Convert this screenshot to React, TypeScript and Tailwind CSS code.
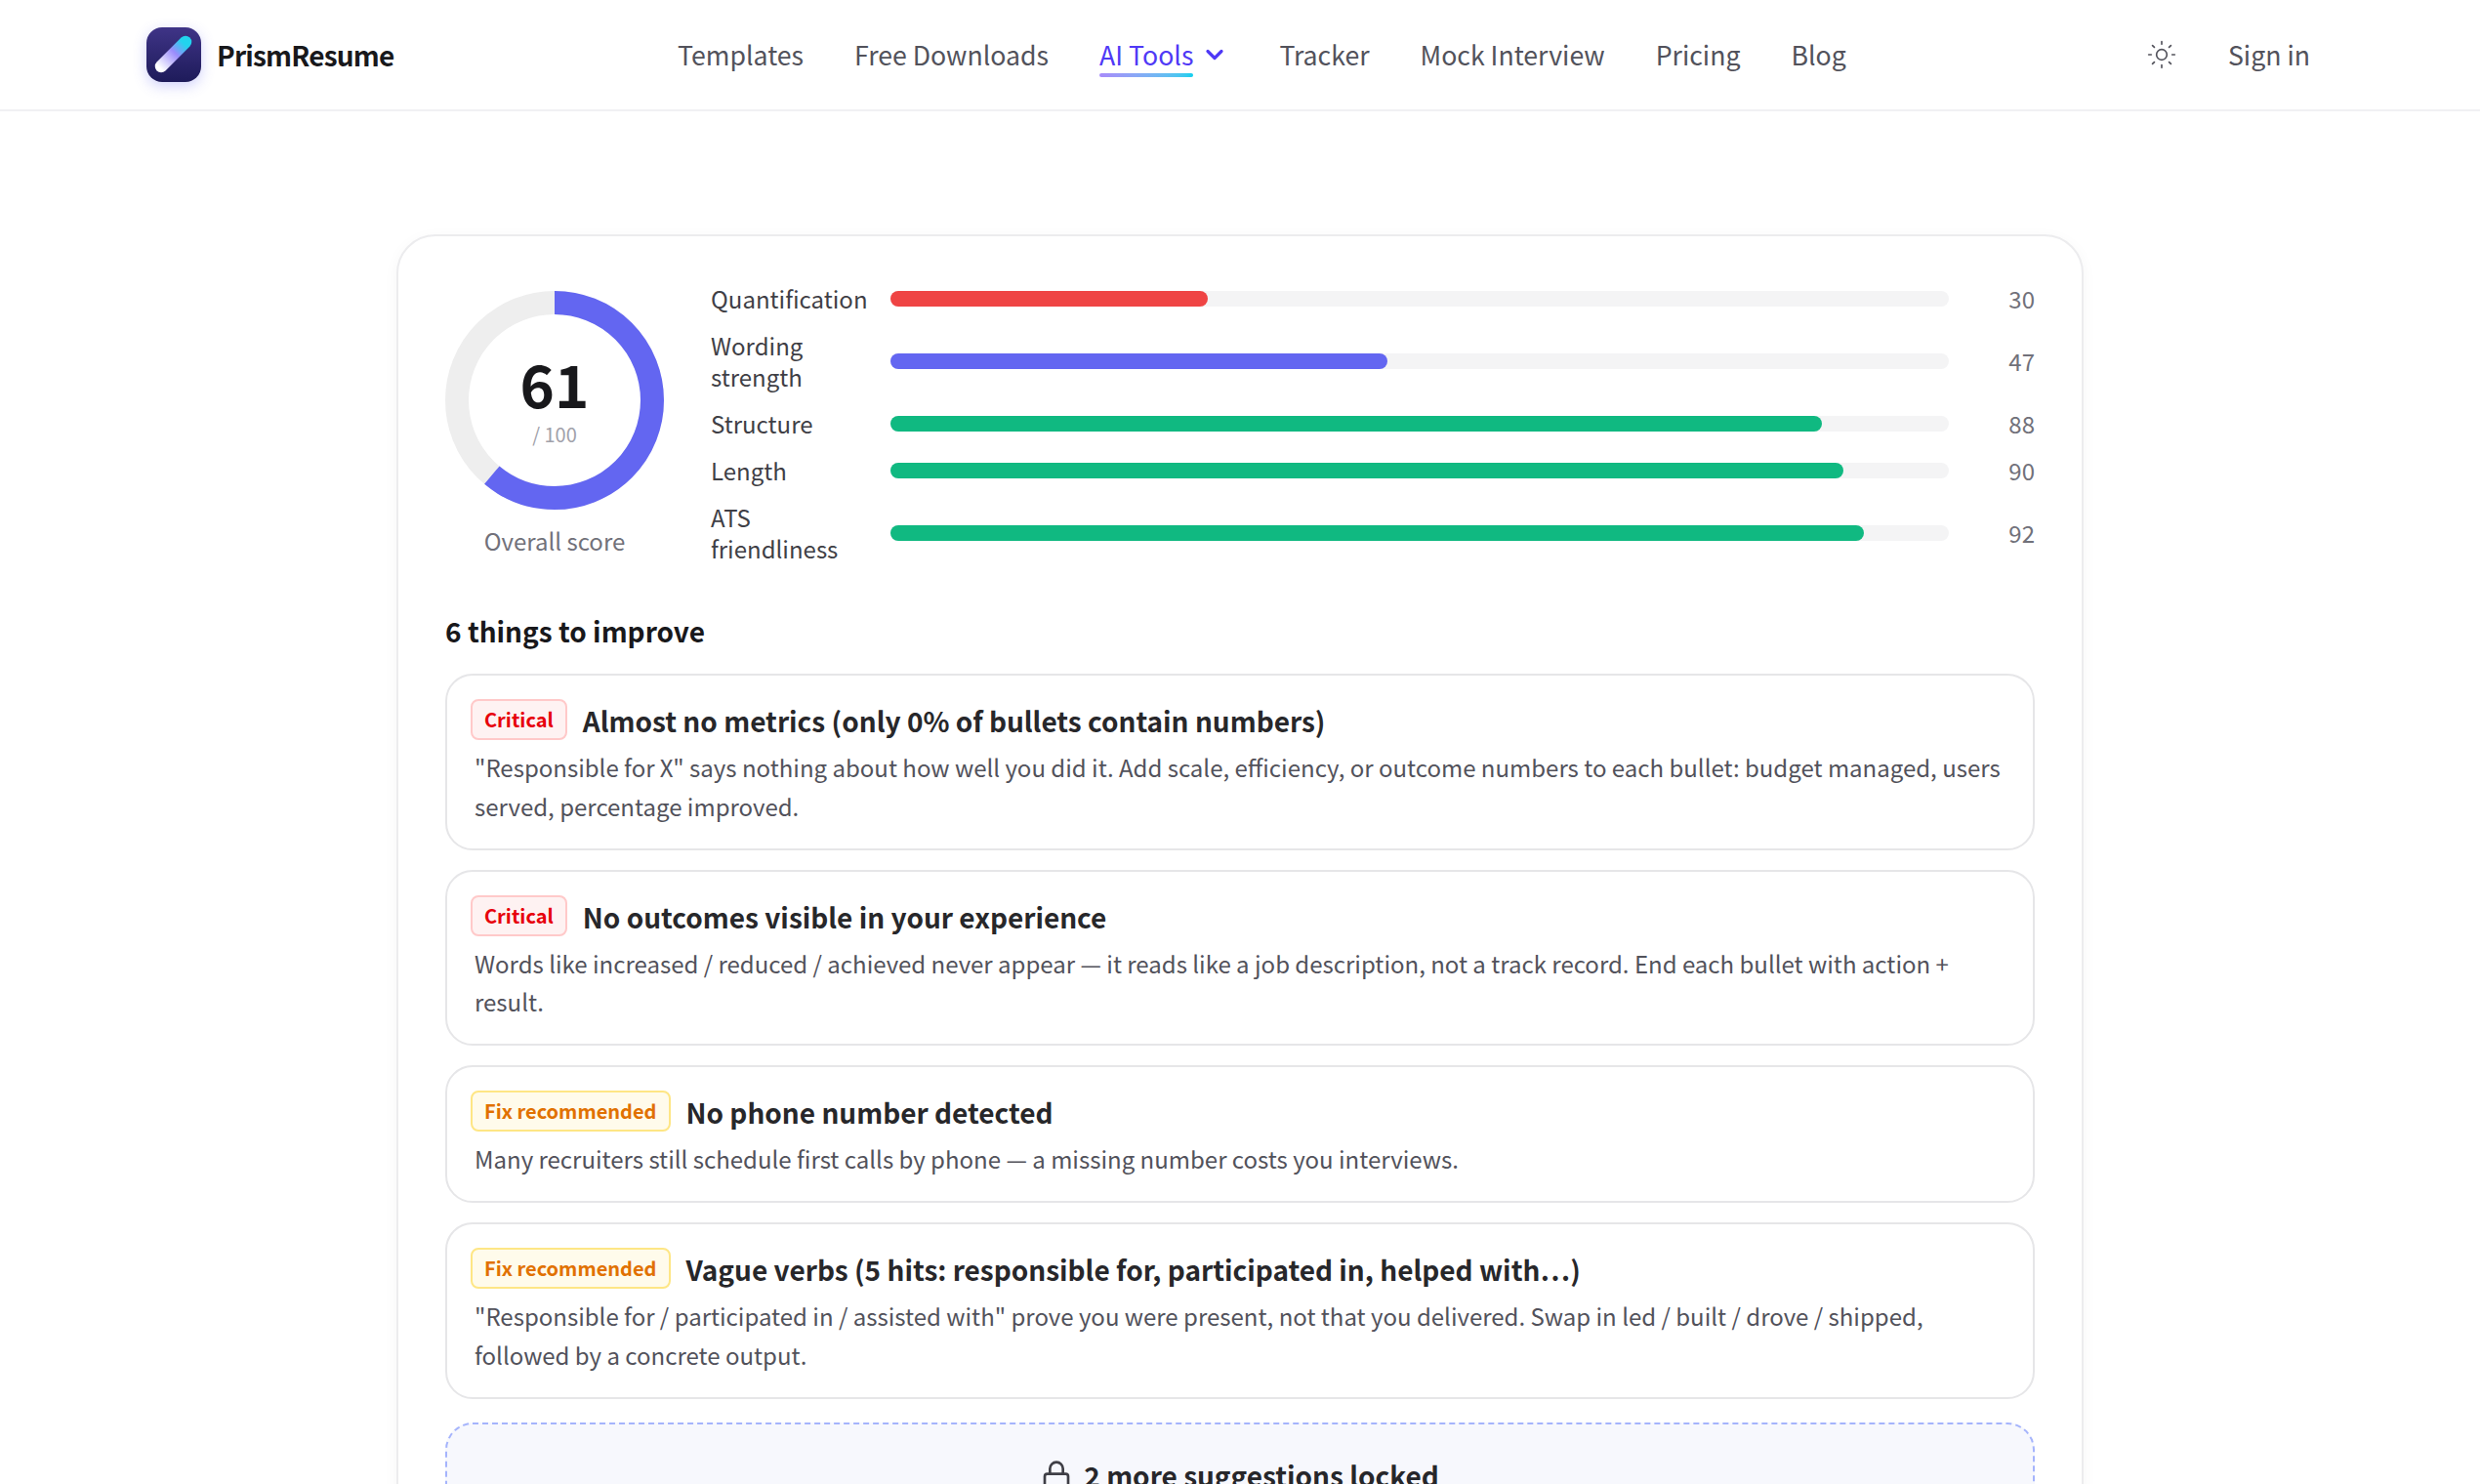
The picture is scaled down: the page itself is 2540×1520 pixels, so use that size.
import React from "react";
import { ChevronDown, Sun, Lock } from "lucide-react";

const F = "font-['Noto_Sans_CJK_SC','Noto_Sans',sans-serif]";

const scores = [
  { label: "Quantification", v: 30, c: "bg-[#ef4444]" },
  { label: "Wording strength", v: 47, c: "bg-[#6366f1]" },
  { label: "Structure", v: 88, c: "bg-[#10b981]" },
  { label: "Length", v: 90, c: "bg-[#10b981]" },
  { label: "ATS friendliness", v: 92, c: "bg-[#10b981]" },
];

const issues = [
  { kind: "c", title: "Almost no metrics (only 0% of bullets contain numbers)", desc: "\"Responsible for X\" says nothing about how well you did it. Add scale, efficiency, or outcome numbers to each bullet: budget managed, users served, percentage improved." },
  { kind: "c", title: "No outcomes visible in your experience", desc: "Words like increased / reduced / achieved never appear — it reads like a job description, not a track record. End each bullet with action + result." },
  { kind: "f", title: "No phone number detected", desc: "Many recruiters still schedule first calls by phone — a missing number costs you interviews." },
  { kind: "f", title: "Vague verbs (5 hits: responsible for, participated in, helped with…)", desc: "\"Responsible for / participated in / assisted with\" prove you were present, not that you delivered. Swap in led / built / drove / shipped, followed by a concrete output." },
];

function Logo() {
  return (
    <div className="w-[56px] h-[56px] rounded-[16px] shadow-[0_4px_14px_rgba(99,102,241,0.3)] bg-gradient-to-b from-[#3f3487] to-[#1e1b5a] shrink-0">
      <svg viewBox="0 0 56 56" width="56" height="56">
        <defs>
          <linearGradient id="pen" x1="12" y1="43" x2="43" y2="12" gradientUnits="userSpaceOnUse">
            <stop offset="0.05" stopColor="#ffffff" />
            <stop offset="0.55" stopColor="#9a8cfb" />
            <stop offset="0.85" stopColor="#22d3ee" />
          </linearGradient>
        </defs>
        <path d="M15 40 L40 15" stroke="url(#pen)" strokeWidth="12.5" strokeLinecap="round" fill="none" />
      </svg>
    </div>
  );
}

function Header() {
  const link = "text-[26.67px] leading-[40px] text-[#52525b]";
  return (
    <header className="h-[114px] flex items-center pl-[150px] pr-[174px] bg-white border-b-2 border-[#f1f1f3]">
      <div className="w-[544px] shrink-0 flex items-center gap-[16px]">
        <Logo />
        <span className="text-[28px] tracking-[-0.8px] font-bold text-[#18181b]">PrismResume</span>
      </div>
      <nav className="flex items-center gap-[52px]">
        <span className={link}>Templates</span>
        <span className={link}>Free Downloads</span>
        <span className="flex items-center gap-[8px] text-[26.67px] leading-[40px] text-[#4f39f6]">
          <span className="relative">
            AI Tools
            <span className="absolute left-0 right-0 top-[39px] h-[4px] rounded-full bg-gradient-to-r from-[#a78bfa] to-[#06cfee]" />
          </span>
          <ChevronDown size={28} strokeWidth={2.75} />
        </span>
        <span className={link}>Tracker</span>
        <span className={link}>Mock Interview</span>
        <span className={link}>Pricing</span>
        <span className={link}>Blog</span>
      </nav>
      <div className="ml-auto flex items-center gap-[52px]">
        <Sun size={32} strokeWidth={1.25} className="text-[#52525b]" />
        <span className={link}>Sign in</span>
      </div>
    </header>
  );
}

function Ring() {
  const r = 100;
  const len = 2 * Math.PI * r;
  return (
    <div className="relative w-[224px] h-[224px]">
      <svg width="224" height="224" viewBox="0 0 224 224">
        <circle cx="112" cy="112" r={r} fill="none" stroke="#eeeeee" strokeWidth="24" />
        <circle cx="112" cy="112" r={r} fill="none" stroke="#6366f1" strokeWidth="24" strokeDasharray={`${len * 0.61} ${len}`} transform="rotate(-90 112 112)" />
      </svg>
      <div className="absolute inset-0 flex flex-col items-center justify-center">
        <span className="text-[60px] leading-[64px] font-bold text-[#18181b] mt-[-1px]">61</span>
        <span className="text-[20px] leading-[28px] text-[#a1a1aa] mt-[7px]">/ 100</span>
      </div>
    </div>
  );
}

function Badge({ kind }: { kind: string }) {
  return kind === "c" ? (
    <span className="shrink-0 h-[42px] px-[12px] flex items-center rounded-[8px] border-2 border-[#ffc9c9] bg-[#fef2f2] text-[#e7000b] text-[20px] font-semibold">Critical</span>
  ) : (
    <span className="shrink-0 h-[42px] px-[12px] flex items-center rounded-[8px] border-2 border-[#fee685] bg-[#fffbeb] text-[#e17100] text-[20px] font-semibold">Fix recommended</span>
  );
}

export default function App() {
  return (
    <div className={`h-[1520px] overflow-hidden bg-white ${F}`}>
      <Header />
      <main className="pt-[126px] flex justify-center">
        <section className="w-[1728px] rounded-[40px] border-2 border-[#ececee] bg-white shadow-[0_4px_16px_rgba(24,24,27,0.04)] px-[48px] pt-[48px]">
          <div className="flex items-center gap-[48px]">
            <div className="flex flex-col items-center gap-[16px] shrink-0">
              <Ring />
              <span className="text-[24px] leading-[32px] text-[#71717a]">Overall score</span>
            </div>
            <div className="flex-1 flex flex-col gap-[16px]">
              {scores.map((s) => (
                <div key={s.label} className="grid grid-cols-[160px_1fr_64px] gap-x-[24px] items-center text-[24px] leading-[32px]">
                  <span className="text-[#3f3f46]">{s.label}</span>
                  <div className="h-[16px] rounded-full bg-[#f4f4f5]">
                    <div className={`h-full rounded-full ${s.c}`} style={{ width: `${s.v}%` }} />
                  </div>
                  <span className="text-right text-[#71717a]">{s.v}</span>
                </div>
              ))}
            </div>
          </div>
          <h2 className="mt-[48px] text-[28px] leading-[40px] font-bold text-[#18181b]">6 things to improve</h2>
          <div className="mt-[24px] flex flex-col gap-[20px]">
            {issues.map((i) => (
              <div key={i.title} className="rounded-[28px] border-2 border-[#e6e6e8] pl-[24px] pr-[28px] pt-[24px] pb-[23.5px]">
                <div className="flex items-start gap-[16px]">
                  <Badge kind={i.kind} />
                  <h3 className="mt-[1px] text-[28px] leading-[42px] font-semibold text-[#27272a]">{i.title}</h3>
                </div>
                <p className="ml-[4px] mt-[7px] text-[24px] leading-[39.6px] text-[#52525b]">{i.desc}</p>
              </div>
            ))}
          </div>
          <div className="mt-[24px] h-[200px] rounded-[28px] border-2 border-dashed border-[#a5b4fc] bg-[#f7f8fd] pt-[30px] flex justify-center items-start gap-[12px]">
            <Lock size={32} strokeWidth={2} className="text-[#3f3f46] mt-[6px]" />
            <span className="text-[28px] leading-[44px] font-semibold text-[#27272a]">2 more suggestions locked</span>
          </div>
        </section>
      </main>
    </div>
  );
}
